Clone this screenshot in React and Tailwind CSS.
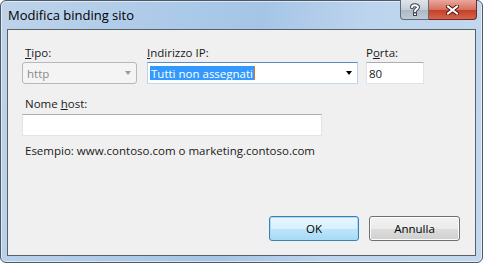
export default function App() {
  return (
    <div className="h-[263px] w-[483px] bg-white font-['Open_Sans',sans-serif] text-[11.5px] leading-[15px] text-[#1a1a1a]">
      <div className="relative flex h-full w-full flex-col rounded-[6px] border border-[#4c5966] bg-[linear-gradient(100deg,#bdd3ea_0%,#abc9e8_35%,#a6c5e6_50%,#bcd4ed_70%,#c3d8ee_100%)] shadow-[inset_0_0_0_1px_rgba(255,255,255,0.55)]">
        {/* title bar */}
        <div className="flex h-[28px] shrink-0 items-start">
          <div className="pl-[7px] pt-[6px] text-[13px] leading-[16px] text-black">Modifica binding sito</div>
          <div className="ml-auto mr-[5px] flex h-[20px] -mt-px">
            <div className="flex w-[29px] items-center justify-center rounded-bl-[4px] border border-t-0 border-[#5d6b7b] bg-[linear-gradient(#dfe4ea,#c5ced8_50%,#aab6c3_51%,#c0cad5)]">
              <svg width="10" height="13" viewBox="0 0 10 13">
                <path d="M2 4.2 C2 1.8 8 1.6 8 4.2 C8 6 5 6.2 5 8.2" fill="none" stroke="#3a4450" strokeWidth="4" strokeLinecap="round" />
                <path d="M2 4.2 C2 1.8 8 1.6 8 4.2 C8 6 5 6.2 5 8.2" fill="none" stroke="#fff" strokeWidth="2" strokeLinecap="round" />
                <rect x="3" y="9.5" width="4" height="3.5" fill="#3a4450" />
                <rect x="4" y="10.5" width="2" height="1.5" fill="#fff" />
              </svg>
            </div>
            <div className="flex w-[48px] items-center justify-center rounded-br-[4px] border border-l-0 border-t-0 border-[#6b2a22] bg-[linear-gradient(#eaa89c,#d7705f_50%,#c43d26_51%,#d7634c)]">
              <svg width="13" height="10" viewBox="0 0 13 10">
                <path d="M2 1.5 L11 8.5 M11 1.5 L2 8.5" stroke="#4a1a14" strokeWidth="4" strokeLinecap="square" />
                <path d="M2 1.5 L11 8.5 M11 1.5 L2 8.5" stroke="#fff" strokeWidth="2" strokeLinecap="square" />
              </svg>
            </div>
          </div>
        </div>

        {/* client area */}
        <div className="mx-[6px] mb-[6px] flex flex-1 flex-col border border-[#5a6068] bg-[#f0f0f0] pl-[14px] pt-[15px]">
          <div className="flex items-start">
            <div className="flex w-[115px] flex-col">
              <span className="pl-[3px]"><u>T</u>ipo:</span>
              <div className="mt-[2px] flex h-[22px] items-center rounded-[3px] border border-[#b5b9bd] bg-[#f4f4f4] pl-[4px] pr-[4px] text-[#8a8a8a]">
                <span>http</span>
                <span className="ml-auto mr-[1px] h-0 w-0 border-x-[3.5px] border-t-[4px] border-x-transparent border-t-[#9a9a9a]" />
              </div>
            </div>

            <div className="ml-[10px] flex w-[211px] flex-col">
              <span><u>I</u>ndirizzo IP:</span>
              <div className="mt-[2px] flex h-[22px] items-center border border-[#5b8cbf] border-b-[#c3d9ee] border-l-[#b9d2ea] border-r-[#b9d2ea] bg-white pl-[2px] pr-[5px]">
                <span className="flex h-[14px] items-center bg-[#3399ff] pl-[1px] pr-[1px] text-white">Tutti non assegnati</span>
                <span className="h-[14px] w-px bg-[#d27a2a]" />
                <span className="ml-auto h-0 w-0 border-x-[3.5px] border-t-[4px] border-x-transparent border-t-black" />
              </div>
            </div>

            <div className="ml-[8px] flex w-[58px] flex-col">
              <span>P<u>o</u>rta:</span>
              <div className="mt-[2px] flex h-[22px] items-center border border-[#e2e3ea] border-t-[#abadb3] bg-white pl-[2px]">
                80
              </div>
            </div>
          </div>

          <span className="mt-[12px] pl-[3px]">Nome <u>h</u>ost:</span>
          <div className="mt-[3px] h-[22px] w-[300px] border border-[#e2e3ea] border-t-[#abadb3] bg-white" />
          <span className="mt-[7px] pl-[3px]">Esempio: www.contoso.com o marketing.contoso.com</span>

          <div className="mt-auto mb-[14px] mr-[15px] flex justify-end gap-[10px]">
            <button className="flex h-[25px] w-[90px] items-center justify-center rounded-[3px] border border-[#3c7fb1] bg-[linear-gradient(#eaf6fd,#d9f0fc_50%,#bee6fd_51%,#a7d9f5)] shadow-[inset_0_0_0_1px_#a8dcf7] text-black">
              OK
            </button>
            <button className="flex h-[25px] w-[91px] items-center justify-center rounded-[3px] border border-[#707070] bg-[linear-gradient(#f2f2f2,#ebebeb_50%,#dddddd_51%,#cfcfcf)] shadow-[inset_0_0_0_1px_#fcfcfc] text-black">
              Annulla
            </button>
          </div>
        </div>
      </div>
    </div>
  );
}
